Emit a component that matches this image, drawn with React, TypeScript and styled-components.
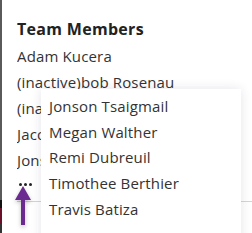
import React from "react";
import styled, { createGlobalStyle } from "styled-components";

const Global = createGlobalStyle`
  html, body { margin: 0; padding: 0; background: #fff; }
  body { font-family: "Open Sans", "Liberation Sans", sans-serif; overflow: hidden; }
`;

const Page = styled.div`
  position: relative;
  width: 252px;
  height: 233px;
  display: flex;
  overflow: hidden;
`;

const Edge = styled.div`
  width: 2px;
  flex: none;
  display: flex;
  flex-direction: column;
  background: #555;
`;

const EdgeSpot = styled.div<{ $h: number; $c: string }>`
  height: ${(p) => p.$h}px;
  background: ${(p) => p.$c};
`;

const Panel = styled.div`
  flex: 1;
  padding: 17px 0 0 15px;
  display: flex;
  flex-direction: column;
  min-width: 0;
`;

const Title = styled.div`
  font-size: 16px;
  font-weight: 700;
  letter-spacing: 0.3px;
  color: #222;
  line-height: 24px;
  margin-bottom: 2px;
`;

const Member = styled.div<{ $clip?: boolean }>`
  font-size: 15px;
  letter-spacing: 0.15px;
  line-height: 26px;
  color: #333;
  white-space: nowrap;
  overflow: hidden;
  width: ${(p) => (p.$clip ? "24px" : "auto")};
`;

const More = styled.div`
  display: flex;
  gap: 2px;
  padding: 10px 0 0 2px;
  height: 20px;
  box-sizing: border-box;
`;

const Dot = styled.span`
  width: 3px;
  height: 3px;
  border-radius: 50%;
  background: #222;
`;

const Rule = styled.div`
  height: 1px;
  background: #d4d4dc;
  margin-top: 8px;
`;

const Popup = styled.div`
  position: absolute;
  left: 41px;
  top: 89px;
  width: 200px;
  height: 160px;
  background: #fff;
  box-shadow: 0 0 10px rgba(40, 40, 90, 0.12);
  padding: 5px 0 0 8px;
  box-sizing: border-box;
`;

const PopupItem = styled.div`
  font-size: 15px;
  letter-spacing: 0.15px;
  line-height: 25.7px;
  color: #333;
  white-space: nowrap;
`;

const Arrow = styled.svg`
  position: absolute;
  left: 14px;
  top: 185px;
  filter: drop-shadow(0 2px 2px rgba(0, 0, 0, 0.25));
`;

const members: { name: string; clip?: boolean }[] = [
  { name: "Adam Kucera" },
  { name: "(inactive)bob Rosenau" },
  { name: "(inactive)Jacob", clip: true },
  { name: "Jacob", clip: true },
  { name: "Jonson", clip: true },
];

const hidden = [
  "Jonson Tsaigmail",
  "Megan Walther",
  "Remi Dubreuil",
  "Timothee Berthier",
  "Travis Batiza",
];

export default function App() {
  return (
    <>
      <Global />
      <Page>
        <Edge>
          <EdgeSpot $h={200} $c="#5a5a5a" />
          <EdgeSpot $h={8} $c="#111" />
          <EdgeSpot $h={16} $c="#6a1028" />
          <EdgeSpot $h={9} $c="#333" />
        </Edge>
        <Panel>
          <Title>Team Members</Title>
          {members.map((m) => (
            <Member key={m.name} $clip={m.clip}>
              {m.name}
            </Member>
          ))}
          <More>
            <Dot />
            <Dot />
            <Dot />
          </More>
          <Rule />
        </Panel>
        <Popup>
          {hidden.map((m) => (
            <PopupItem key={m}>{m}</PopupItem>
          ))}
        </Popup>
        <Arrow width="18" height="42" viewBox="0 0 18 42">
          <path d="M9 1 L17 15 L11 15 L11 40 L7 40 L7 15 L1 15 Z" fill="#6b2a8f" />
        </Arrow>
      </Page>
    </>
  );
}
